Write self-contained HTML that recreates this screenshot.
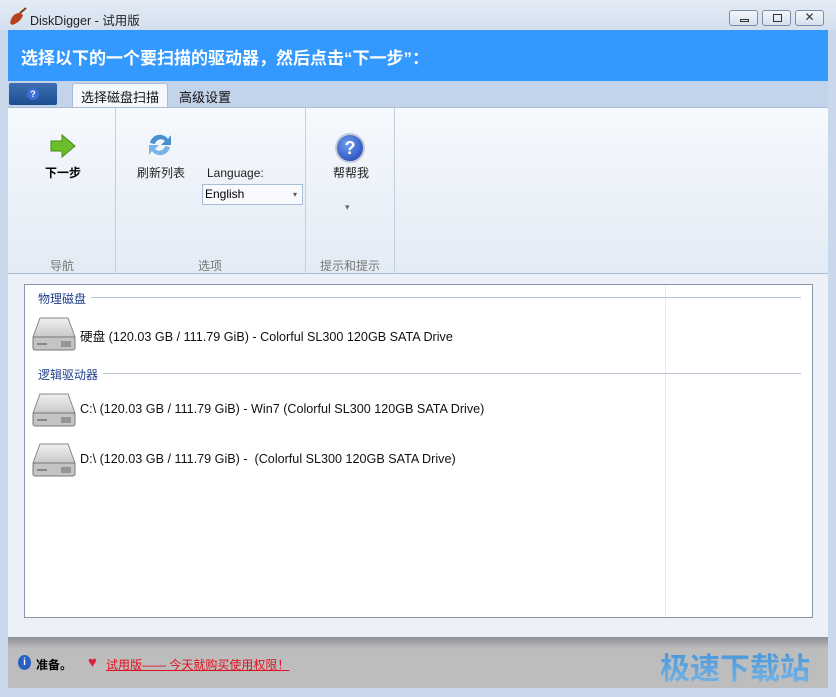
<!DOCTYPE html><html><head><meta charset="utf-8"><style>
*{margin:0;padding:0;box-sizing:border-box}
body{width:836px;height:697px;overflow:hidden;background:#c9d8ea;font-family:"Liberation Sans","Noto Sans CJK SC",sans-serif;font-size:12px;position:relative}
.a{position:absolute}
.btn{position:absolute;top:10px;width:29px;height:16px;border:1px solid #7f8ea3;border-radius:3px;background:linear-gradient(#f4f7fb,#d6e0ec)}
.drv{position:absolute;left:32px;width:44px;height:34px}
.t{position:absolute;font-size:12.6px;color:#111}
</style></head><body>
<div class="a" style="left:0;top:0;width:836px;height:30px;background:linear-gradient(#e4ecf6,#d3dfee)"></div>
<svg class="a" style="left:8px;top:7px" width="20" height="20"><path d="M2 16 Q4 6 12 6 L15 8 Q13 15 4 18Z" fill="#b8411a"/><path d="M12 6 L18 1" stroke="#7a3a12" stroke-width="2"/></svg>
<div class="a" style="left:30px;top:10px;font-size:12.5px;color:#222">DiskDigger - 试用版</div>
<div class="btn" style="left:729px"><div class="a" style="left:10px;top:8px;width:9px;height:3px;border:1px solid #333"></div></div>
<div class="btn" style="left:762px"><div class="a" style="left:10px;top:3px;width:9px;height:8px;border:1px solid #333"></div></div>
<div class="btn" style="left:795px;text-align:center;line-height:13px;font-size:12px;color:#333">✕</div>
<div class="a" style="left:8px;top:30px;width:820px;height:51px;background:#3399ff"></div>
<div class="a" style="left:21px;top:44px;font-size:17px;font-weight:bold;color:#fff">选择以下的一个要扫描的驱动器，然后点击“下一步”：</div>
<div class="a" style="left:8px;top:81px;width:820px;height:26px;background:#c3d4ea"></div>
<div class="a" style="left:9px;top:83px;width:48px;height:22px;background:linear-gradient(#3d6fb0,#1c4e92);border-radius:2px"></div>
<div class="a" style="left:27px;top:88px;width:12px;height:12px;border-radius:50%;background:#3b6fd6;color:#fff;font-size:9px;text-align:center;line-height:12px;font-weight:bold">?</div>
<div class="a" style="left:72px;top:83px;width:96px;height:25px;background:#f4f7fb;border:1px solid #a9bcd6;border-bottom:none;border-radius:3px 3px 0 0"></div>
<div class="a" style="left:81px;top:87px;font-size:13px;color:#111">选择磁盘扫描</div>
<div class="a" style="left:179px;top:87px;font-size:13px;color:#111">高级设置</div>
<div class="a" style="left:8px;top:107px;width:820px;height:167px;background:linear-gradient(#f6f9fd,#e3ebf5);border-top:1px solid #a9bcd6;border-bottom:1px solid #a9bcd6"></div>
<div class="a" style="left:115px;top:108px;width:1px;height:165px;background:#c3d0e0"></div>
<div class="a" style="left:305px;top:108px;width:1px;height:165px;background:#c3d0e0"></div>
<div class="a" style="left:394px;top:108px;width:1px;height:165px;background:#c3d0e0"></div>
<svg class="a" style="left:50px;top:133px" width="26" height="26"><path d="M1 8 H12 V2 L25 13 L12 24 V18 H1Z" fill="#6cbf2a" stroke="#3f8d16"/></svg>
<div class="a" style="left:45px;top:164px;font-size:12px;font-weight:bold">下一步</div>
<svg class="a" style="left:146px;top:131px" width="28" height="28"><path d="M4 12 A10 10 0 0 1 22 8 L25 4 V14 H15 L19 10 A6 6 0 0 0 9 13Z" fill="#4a8fd0"/><path d="M24 16 A10 10 0 0 1 6 20 L3 24 V14 H13 L9 18 A6 6 0 0 0 19 15Z" fill="#7ab2e4"/></svg>
<div class="a" style="left:137px;top:164px;font-size:12px;color:#222">刷新列表</div>
<div class="a" style="left:207px;top:166px;font-size:12px;color:#222">Language:</div>
<div class="a" style="left:202px;top:184px;width:101px;height:21px;border:1px solid #a9bcd6;background:#f7f9fc;font-size:12px;padding:2px 0 0 2px">English<span class="a" style="right:5px;top:5px;font-size:8px;color:#555">▾</span></div>
<div class="a" style="left:335px;top:133px;width:30px;height:30px;border-radius:50%;background:radial-gradient(circle at 40% 35%,#6f9cf0,#1d3fae);border:2px solid #c5cbd6;color:#fff;font-weight:bold;font-size:18px;text-align:center;line-height:26px">?</div>
<div class="a" style="left:333px;top:164px;font-size:12px;color:#222">帮帮我</div>
<div class="a" style="left:345px;top:202px;font-size:9px;color:#666">▾</div>
<div class="a" style="left:50px;top:257px;color:#777">导航</div>
<div class="a" style="left:198px;top:257px;color:#777">选项</div>
<div class="a" style="left:320px;top:257px;color:#777">提示和提示</div>
<div class="a" style="left:8px;top:274px;width:820px;height:363px;background:#edf1f7"></div>
<div class="a" style="left:24px;top:284px;width:789px;height:334px;background:#fff;border:1px solid #8a96a6"></div>
<div class="a" style="left:665px;top:285px;width:1px;height:332px;background:#e8ecf1"></div>
<div class="a" style="left:38px;top:290px;color:#1f3f8a;font-size:12px">物理磁盘</div>
<div class="a" style="left:91px;top:297px;width:710px;height:1px;background:#b6c4d6"></div>
<div class="a" style="left:38px;top:366px;color:#1f3f8a;font-size:12px">逻辑驱动器</div>
<div class="a" style="left:103px;top:373px;width:698px;height:1px;background:#b6c4d6"></div>
<svg width="0" height="0"><defs><linearGradient id="g" x1="0" y1="0" x2="0" y2="1"><stop offset="0" stop-color="#f0f0f0"/><stop offset="1" stop-color="#c8c8c8"/></linearGradient><g id="d"><path d="M8 1 H36 L43 20 H1Z" fill="url(#g)" stroke="#888"/><rect x="1" y="20" width="42" height="13" rx="2" fill="#c4c4c4" stroke="#777"/><path d="M30 24v6M32 24v6M34 24v6M36 24v6M38 24v6" stroke="#666"/><rect x="5" y="26" width="10" height="2" fill="#888"/></g></defs></svg>
<svg class="drv" style="top:317px"><use href="#d"/></svg>
<svg class="drv" style="top:393px"><use href="#d"/></svg>
<svg class="drv" style="top:443px"><use href="#d"/></svg>
<div class="t" style="left:80px;top:326px">硬盘 (120.03 GB / 111.79 GiB) - Colorful SL300 120GB SATA Drive</div>
<div class="t" style="left:80px;top:402px">C:\ (120.03 GB / 111.79 GiB) - Win7 (Colorful SL300 120GB SATA Drive)</div>
<div class="t" style="left:80px;top:452px">D:\ (120.03 GB / 111.79 GiB) -&nbsp; (Colorful SL300 120GB SATA Drive)</div>
<div class="a" style="left:8px;top:637px;width:820px;height:51px;background:linear-gradient(#8e9096,#bdbdbd 12px,#bdbdbd)"></div>
<div class="a" style="left:18px;top:655px;width:13px;height:15px;border-radius:50%;background:#2a5fc4;color:#fff;font-size:10px;font-weight:bold;text-align:center;line-height:15px">i</div>
<div class="a" style="left:36px;top:656px;font-size:12px;font-weight:bold">准备。</div>
<div class="a" style="left:88px;top:654px;color:#e0203a;font-size:15px">♥</div>
<div class="a" style="left:106px;top:656px;color:#e01020;font-size:12px;text-decoration:underline">试用版—— 今天就购买使用权限！</div>
<div class="a" style="left:660px;top:644px;font-size:30px;font-weight:bold;letter-spacing:0px;background:linear-gradient(#3f8fd8,#7ab8e6);-webkit-background-clip:text;background-clip:text;color:transparent">极速下载站</div>
</body></html>
